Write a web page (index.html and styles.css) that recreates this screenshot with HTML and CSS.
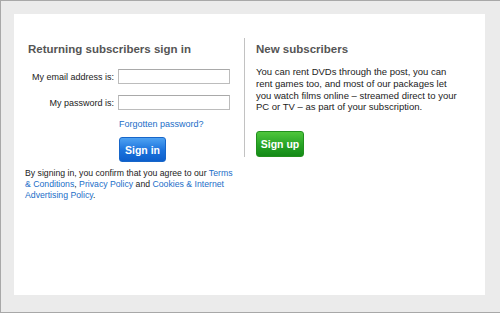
FILE: index.html
```html
<!DOCTYPE html>
<html>
<head>
<meta charset="utf-8">
<link rel="stylesheet" href="styles.css">
</head>
<body>
<div class="panel">
  <div class="col-left">
    <h2 class="heading heading-left">Returning subscribers sign in</h2>
    <div class="form">
      <label class="label">My email address is:</label>
      <div class="input"></div>
      <label class="label">My password is:</label>
      <div class="input"></div>
    </div>
    <div class="forgot"><a class="link" href="#">Forgotten password?</a></div>
    <div class="btn-row"><span class="btn btn-blue">Sign in</span></div>
    <p class="terms">By signing in, you confirm that you agree to our <a class="link" href="#">Terms</a> <a class="link" href="#">&amp; Conditions</a>, <a class="link" href="#">Privacy Policy</a> and <a class="link" href="#">Cookies &amp; Internet</a> <a class="link" href="#">Advertising Policy</a>.</p>
  </div>
  <div class="col-right">
    <h2 class="heading">New subscribers</h2>
    <p class="para">You can rent DVDs through the post, you can rent games too, and most of our packages let you watch films online – streamed direct to your PC or TV – as part of your subscription.</p>
    <span class="btn btn-green">Sign up</span>
  </div>
</div>
</body>
</html>
```

FILE: styles.css
```css
html, body {
  margin: 0;
}
body {
  width: 500px;
  height: 313px;
  box-sizing: border-box;
  background: #ebebeb;
  border-top: 1px solid #a8a8a8;
  border-left: 1px solid #a8a8a8;
  border-bottom: 1px solid #a8a8a8;
  padding: 13px 15px 17px 13px;
  font-family: "Liberation Sans", Arial, sans-serif;
  color: #222;
  overflow: hidden;
}
.panel {
  width: 471px;
  height: 281px;
  box-sizing: border-box;
  background: #fff;
  display: flex;
  align-items: flex-start;
  padding-top: 24px;
}
.col-left {
  width: 230px;
  box-sizing: border-box;
  padding-left: 11px;
}
.col-right {
  border-left: 1px solid #c2c2c2;
  padding-left: 11px;
  display: flex;
  flex-direction: column;
  align-items: flex-start;
}
.heading {
  margin: 4px 0 0 0;
  font-size: 11.5px;
  line-height: 14px;
  font-weight: bold;
  color: #555;
}
.heading-left {
  margin-left: 3px;
}
.form {
  display: grid;
  grid-template-columns: 89px 112px;
  column-gap: 4px;
  row-gap: 11px;
  align-items: center;
  margin-top: 13px;
}
.label {
  text-align: right;
  font-size: 9px;
  line-height: 12px;
  color: #222;
}
.input {
  height: 15px;
  box-sizing: border-box;
  border: 1px solid #bcbcbc;
  border-top-color: #a9a9a9;
  background: #fff;
}
.forgot {
  margin: 8px 0 0 94px;
  font-size: 9px;
  line-height: 12px;
}
.link {
  color: #1b6ec8;
  text-decoration: none;
}
.btn-row {
  margin: 7px 0 0 94px;
}
.btn {
  display: inline-flex;
  align-items: center;
  justify-content: center;
  box-sizing: border-box;
  height: 25px;
  border-radius: 3px;
  color: #fff;
  font-weight: bold;
  font-size: 10.5px;
}
.btn-blue {
  width: 47px;
  background: linear-gradient(#4ea2f2, #1b72dc 55%, #0d5fcc);
  border: 1px solid #1766c9;
}
.btn-green {
  width: 48px;
  height: 26px;
  margin-top: 18px;
  background: linear-gradient(#4fc63c, #26a325 55%, #148a17);
  border: 1px solid #22901d;
}
.terms {
  width: 214px;
  margin: 6px 0 0 0;
  font-size: 8.7px;
  line-height: 10.8px;
  color: #222;
}
.para {
  width: 206px;
  margin: 10px 0 0 0;
  font-size: 9.5px;
  line-height: 11.8px;
  color: #222;
}
```
